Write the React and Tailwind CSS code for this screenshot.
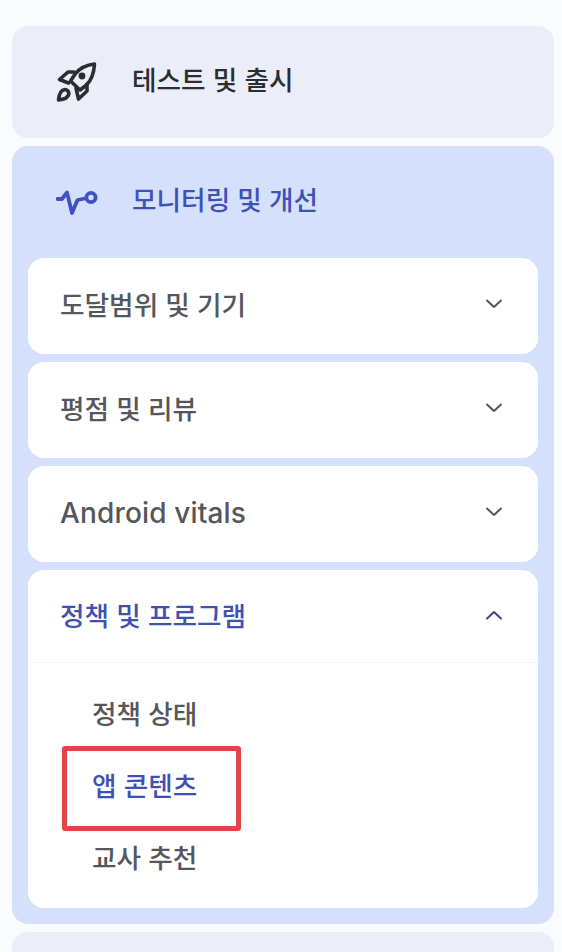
const font = { fontFamily: '"Inter", "Noto Sans CJK KR", sans-serif' };

function Rocket() {
  return (
    <svg width="42" height="42" viewBox="0 0 42 42" fill="none" stroke="#2b2d31" strokeWidth="3.6" strokeLinejoin="round" strokeLinecap="round">
      <path d="M38.5 3 C30 4 24 7 19.5 12.5 L14.5 20 L24 29 L30.5 24 C35.5 19 38 12 38.5 3 Z" />
      <path d="M18 11 L12 11 L3.5 18.5 L12.5 22" />
      <path d="M31 23 L31 30 L22.5 38 L20 27" />
      <circle cx="26" cy="15" r="3.4" fill="#2b2d31" stroke="none" />
      <path d="M9 28.5 C5 29 3 33 2.5 39 C8.5 38.5 12 36.5 12.8 33 C13 30.5 11 28.5 9 28.5 Z" />
    </svg>
  );
}

function Vitals() {
  return (
    <svg width="42" height="28" viewBox="0 0 42 28" fill="none" stroke="#3f51c4" strokeWidth="3.8" strokeLinejoin="round" strokeLinecap="round">
      <path d="M1.5 11 H6 L11 4.5 L16 25 L21.5 12 L29 10.5" />
      <circle cx="35" cy="9.5" r="4.6" />
    </svg>
  );
}

function Chevron({ up, color }) {
  return (
    <svg width="18" height="12" viewBox="0 0 18 12" fill="none" stroke={color} strokeWidth="2" strokeLinecap="round" strokeLinejoin="round">
      <path d={up ? "M2 9.5 L9 3 L16 9.5" : "M2 2.5 L9 9 L16 2.5"} />
    </svg>
  );
}

function Row({ label, latin }) {
  return (
    <div className="h-24 bg-white rounded-2xl flex items-center justify-between pl-8 pr-[35px]">
      <span className={latin ? "pb-0.5 text-[28px] tracking-[0.15px] font-medium text-[#55575c]" : "pb-0.5 text-[26.7px] font-medium text-[#55575c]"}>{label}</span>
      <span className="mb-1 flex">
        <Chevron color="#55575c" />
      </span>
    </div>
  );
}

export default function App() {
  return (
    <div style={font} className="relative w-[562px] h-[952px] overflow-hidden bg-[#f9fbff] pt-[26px] pl-3 pr-2 flex flex-col gap-2">
      <div className="h-[112px] shrink-0 rounded-2xl bg-[#ebeef8] flex items-center pl-[44px]">
        <Rocket />
        <span className="ml-[34px] pb-1 text-[26.7px] font-medium text-[#2b2d31]">테스트 및 출시</span>
      </div>

      <div className="h-[778px] shrink-0 rounded-2xl bg-[#d5e0fc] px-4 flex flex-col">
        <div className="h-[112px] shrink-0 flex items-center pl-[28px]">
          <Vitals />
          <span className="ml-[34px] pb-1 text-[26.7px] font-medium text-[#3f51b5]">모니터링 및 개선</span>
        </div>
        <div className="flex flex-col gap-2">
          <Row label="도달범위 및 기기" />
          <Row label="평점 및 리뷰" />
          <Row label="Android vitals" latin />
          <div className="h-[338px] bg-white rounded-2xl flex flex-col">
            <div className="h-[93px] shrink-0 border-b border-[#f6f7fa] flex items-center justify-between pl-8 pr-[35px]">
              <span className="text-[26.7px] font-medium text-[#3f51b5]">정책 및 프로그램</span>
              <span className="mb-0.5 flex">
                <Chevron up color="#3c4682" />
              </span>
            </div>
            <div className="flex flex-col pl-16 pt-[15px]">
              <span className="h-[72px] flex items-center text-[26.7px] font-medium text-[#55575c]">정책 상태</span>
              <span className="h-[72px] flex items-center text-[26.7px] font-medium text-[#3f51b5]">앱 콘텐츠</span>
              <span className="h-[72px] flex items-center text-[26.7px] font-medium text-[#55575c]">교사 추천</span>
            </div>
          </div>
        </div>
      </div>

      <div className="h-[60px] shrink-0 rounded-2xl bg-[#ebeef8]" />

      <div className="absolute left-[62px] top-[746px] w-[179px] h-[85px] border-[5px] border-[#df4747] rounded-[3px]" />
    </div>
  );
}
